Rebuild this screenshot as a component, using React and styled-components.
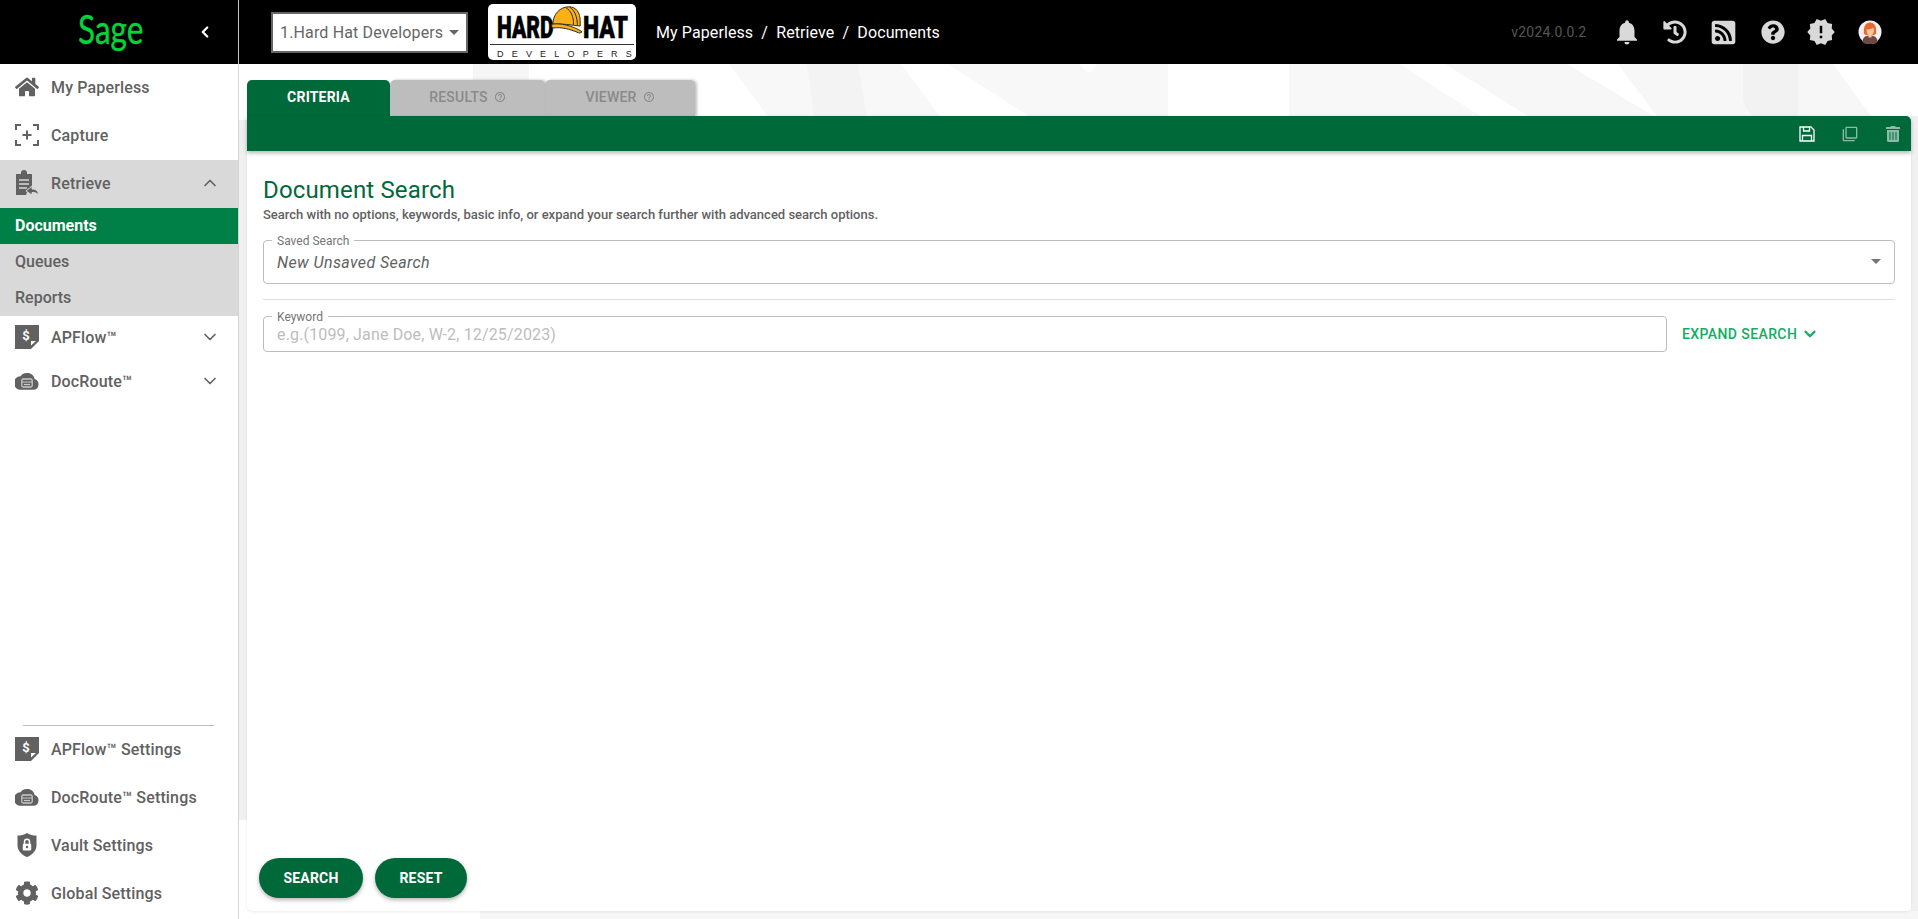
import React from "react";
import styled, { createGlobalStyle } from "styled-components";
import { ChevronLeft, ChevronDown, ChevronUp } from "lucide-react";
import { FaHome, FaCog, FaHistory, FaRssSquare, FaQuestionCircle, FaTrashAlt } from "react-icons/fa";
import { MdNotifications, MdNewReleases, MdOutlineFilterNone, MdHelpOutline } from "react-icons/md";

const GREEN = "#00693a";
const GREY = "#616161";

const CaptureIcon = () => (
  <svg width="24" height="24" viewBox="0 0 24 24" fill="none" stroke={GREY} strokeWidth="2">
    <path d="M1 7V2h5M18 2h5v5M23 17v5h-5M6 22H1v-5" />
    <path d="M12 7.500v9M7.500 12h9" />
  </svg>
);

const RetrieveIcon = () => (
  <svg width="24" height="26" viewBox="0 0 24 26">
    <path fill={GREY} d="M1 4h5V3a3 3 0 0 1 6 0v1h5v15h-4l-2 6H1z" />
    <path stroke="#d9d9d9" strokeWidth="1.600" d="M4 10h10M4 14h10M4 18h8" />
    <path fill={GREY} stroke="#d9d9d9" strokeWidth="1" d="M11 21l6-5v3c4 0 6 2 7 6-2-2-4-2.500-7-2.500V25z" />
  </svg>
);

const ApFlowIcon = () => (
  <svg width="24" height="24" viewBox="0 0 24 24">
    <path fill={GREY} d="M0 0h24v16l-8 8H0z" />
    <text x="11" y="15" fontFamily="Roboto, sans-serif" fontSize="13" fontWeight="700" fill="#fff" textAnchor="middle">$</text>
    <path fill="#fff" d="M16 20.500l5-4.500h-5z" />
  </svg>
);

const DocRouteIcon = () => (
  <svg width="24" height="24" viewBox="0 0 24 24">
    <path fill={GREY} d="M19.700 10A8 8 0 0 0 5.500 7.200 6.800 6.800 0 0 0 5.800 20.800h13.200a5.600 5.600 0 0 0 .7-10.800z" />
    <rect x="6.800" y="10" width="10.400" height="8" rx="1.500" fill="none" stroke="#c9c9c9" strokeWidth="1.300" />
    <path d="M7 13h10" stroke="#c9c9c9" strokeWidth="1" />
    <path d="M9 15.500h6" stroke="#c9c9c9" strokeWidth="1.200" />
  </svg>
);

const VaultIcon = () => (
  <svg width="24" height="24" viewBox="0 0 24 24">
    <path fill={GREY} d="M12 0C9 2 6 2.500 2.500 2.500V12c0 5.500 4 10 9.500 12 5.500-2 9.500-6.500 9.500-12V2.500C18 2.500 15 2 12 0z" />
    <path fill="none" stroke="#fff" strokeWidth="1.500" d="M9.500 11V8.800a2.500 2.500 0 0 1 5 0V11" />
    <rect x="7.800" y="10.800" width="8.400" height="6.700" rx="1" fill="#fff" />
    <circle cx="12" cy="14" r="1.200" fill={GREY} />
  </svg>
);

const SaveIcon = () => (
  <svg width="16" height="16" viewBox="0 0 16 16" fill="none" stroke="#fff" strokeWidth="1.300">
    <path d="M1 1h11l3 3v11H1z" />
    <path d="M4.500 1v4h6V1M3.500 15V9.500h9V15" />
  </svg>
);

const Avatar = () => (
  <svg width="24" height="24" viewBox="0 0 24 24">
    <circle cx="12" cy="12" r="11.500" fill="#f1f1f4" />
    <path fill="#6e4a41" d="M4.500 22c0-4.500 3-6.500 7.500-6.500s7.500 2 7.500 6.500a11.500 11.500 0 0 1-15 0z" />
    <path fill="#e9682b" d="M6 14c-1-6 1-11.500 6-11.500S19 8 18 14l-2 1H8z" />
    <path fill="#f6c7a6" d="M8.500 9.500c2 0 5-.5 7-2l.5 3c0 3-2 5-4 5s-3.500-2-3.500-6zM10.500 14h3v3.500h-3z" />
  </svg>
);

const HelmetIcon = () => (
  <svg width="32" height="29" viewBox="0 0 34 30">
    <path fill="#fbb018" stroke="#222" strokeWidth="1" d="M2 20C2 9 10 1.500 19 1.500c8 0 12 6.500 12 15v5.500C22 21 11 19 2 20z" />
    <path fill="#fbb018" stroke="#222" strokeWidth="1" d="M1 20c9-1.500 22 1.500 32 8-1 1.500-3 1.500-4 1C20 25 10 23 3 24c-2 0-3-2-2-4z" />
    <path fill="none" stroke="#222" strokeWidth="1" d="M16 2.500c5 3 8 9 8 18M20 2c5 3 8 10 8 19" />
  </svg>
);

const navTop = [
  { label: "My Paperless", icon: <FaHome size={24} /> },
  { label: "Capture", icon: <CaptureIcon /> },
];

const navBottom = [
  { label: "APFlow™ Settings", icon: <ApFlowIcon /> },
  { label: "DocRoute™ Settings", icon: <DocRouteIcon /> },
  { label: "Vault Settings", icon: <VaultIcon /> },
  { label: "Global Settings", icon: <FaCog size={24} /> },
];

const App = () => {
  return (
    <Page>
      <GlobalStyle />
      <TopBar>
        <Brand>
          <SageLogo>Sage</SageLogo>
          <ChevronLeft size={18} strokeWidth={3} color="#fff" />
        </Brand>
        <CompanySelect>
          <span>1.Hard Hat Developers</span>
          <Caret />
        </CompanySelect>
        <CompanyLogo>
          <LogoWords>
            <LogoWord $width={65} $scale={0.68}>HARD</LogoWord>
            <LogoWord $width={45} $scale={0.74}>HAT</LogoWord>
          </LogoWords>
          <Helmet><HelmetIcon /></Helmet>
          <LogoSub>DEVELOPERS</LogoSub>
        </CompanyLogo>
        <Crumbs>My Paperless&nbsp; / &nbsp;Retrieve&nbsp; / &nbsp;Documents</Crumbs>
        <Version>v2024.0.0.2</Version>
        <TopIcons>
          <TopIcon><MdNotifications size={30} /></TopIcon>
          <TopIcon><FaHistory size={24} /></TopIcon>
          <TopIcon><FaRssSquare size={27} /></TopIcon>
          <TopIcon><FaQuestionCircle size={24} /></TopIcon>
          <TopIcon><MdNewReleases size={30} /></TopIcon>
          <TopIcon><Avatar /></TopIcon>
        </TopIcons>
      </TopBar>
      <Body>
        <Sidebar>
          {navTop.map((item) => (
            <NavRow key={item.label}>
              <NavIcon>{item.icon}</NavIcon>
              {item.label}
            </NavRow>
          ))}
          <NavRow $open>
            <NavIcon><RetrieveIcon /></NavIcon>
            Retrieve
            <Chevron><ChevronUp size={20} /></Chevron>
          </NavRow>
          <SubRow $active>Documents</SubRow>
          <SubRow>Queues</SubRow>
          <SubRow>Reports</SubRow>
          <NavRow $short>
            <NavIcon><ApFlowIcon /></NavIcon>
            APFlow™
            <Chevron><ChevronDown size={20} /></Chevron>
          </NavRow>
          <NavRow $short>
            <NavIcon><DocRouteIcon /></NavIcon>
            DocRoute™
            <Chevron><ChevronDown size={20} /></Chevron>
          </NavRow>
          <SidebarBottom>
            {navBottom.map((item) => (
              <NavRow key={item.label}>
                <NavIcon>{item.icon}</NavIcon>
                {item.label}
              </NavRow>
            ))}
          </SidebarBottom>
        </Sidebar>
        <Main>
          <Backdrop viewBox="239 64 1679 855" preserveAspectRatio="none">
            <rect x="473" y="64" width="56" height="60" fill="#f6f6f6" />
            <path d="M729 64L815 180H987L901 64z" fill="#f8f8f8" />
            <path d="M807 64h51l10 60h-53z" fill="#f3f3f3" />
            <path d="M948 64H1168V124H1041z" fill="#f8f8f8" />
            <path d="M1080 64h17l-4 6q-4 4-8 0z" fill="#fff" />
            <path d="M1289 64H1399L1493 124H1289z" fill="#f8f8f8" />
            <path d="M1445 64H1567L1667 124H1541z" fill="#f7f7f7" />
            <path d="M1618 64H1833L1925 190H1712z" fill="#f7f7f7" />
            <path d="M1743 64h55v56h-40q-15-10-15-25z" fill="#f2f2f2" />
            <rect x="239" y="120" width="8" height="700" fill="#f0f0f0" />
            <rect x="1911" y="116" width="7" height="803" fill="#f0f0f0" />
            <rect x="480" y="911" width="1438" height="8" fill="#f6f6f6" />
          </Backdrop>
          <Tabs>
            <Tab $active>CRITERIA</Tab>
            <Tab $width={155}>RESULTS <MdHelpOutline size={12} /></Tab>
            <Tab $width={150}>VIEWER <MdHelpOutline size={12} /></Tab>
          </Tabs>
          <Toolbar>
            <ToolIcon><SaveIcon /></ToolIcon>
            <ToolIcon $off><MdOutlineFilterNone size={16} /></ToolIcon>
            <ToolIcon $off><FaTrashAlt size={16} /></ToolIcon>
          </Toolbar>
          <Panel>
            <Title>Document Search</Title>
            <Hint>Search with no options, keywords, basic info, or expand your search further with advanced search options.</Hint>
            <Field $height={44}>
              <FieldLabel>Saved Search</FieldLabel>
              <FieldValue $italic>New Unsaved Search</FieldValue>
              <FieldCaret />
            </Field>
            <Divider />
            <KeywordRow>
              <Field $height={36} $grow>
                <FieldLabel>Keyword</FieldLabel>
                <FieldValue $muted>e.g.(1099, Jane Doe, W-2, 12/25/2023)</FieldValue>
              </Field>
              <ExpandLink>EXPAND SEARCH <ChevronDown size={18} strokeWidth={3} /></ExpandLink>
            </KeywordRow>
            <Actions>
              <PillButton $width={104}>SEARCH</PillButton>
              <PillButton $width={92}>RESET</PillButton>
            </Actions>
          </Panel>
        </Main>
      </Body>
    </Page>
  );
};

const GlobalStyle = createGlobalStyle`
  html, body {
    margin: 0;
    height: 100%;
    overflow: hidden;
    background: #fff;
    font-family: Roboto, "Liberation Sans", sans-serif;
  }
  * {
    box-sizing: border-box;
  }
`;

const Page = styled.div`
  display: flex;
  flex-direction: column;
  height: 919px;
`;

const TopBar = styled.header`
  display: flex;
  align-items: center;
  height: 64px;
  flex-shrink: 0;
  background: #000;
`;

const Brand = styled.div`
  display: flex;
  align-items: center;
  justify-content: space-between;
  width: 239px;
  height: 100%;
  padding: 0 24px 0 78px;
  border-right: 1px solid #c8c8c8;
`;

const SageLogo = styled.div`
  width: 66px;
  font-family: Lato, sans-serif;
  font-size: 41px;
  line-height: 64px;
  color: #00d639;
  padding-bottom: 6px;
  white-space: nowrap;
  -webkit-text-stroke: 0.4px #00d639;
  transform: scaleX(0.77);
  transform-origin: left center;
`;

const CompanySelect = styled.div`
  display: flex;
  align-items: center;
  justify-content: space-between;
  width: 197px;
  height: 41px;
  margin-left: 32px;
  padding: 0 7px;
  border: 2px solid #666;
  background: #fff;
  color: #666;
  font-size: 16px;
  letter-spacing: 0.15px;
`;

const Caret = styled.i`
  width: 0;
  height: 0;
  border-left: 5px solid transparent;
  border-right: 5px solid transparent;
  border-top: 5px solid #666;
`;

const CompanyLogo = styled.div`
  position: relative;
  display: flex;
  flex-direction: column;
  width: 148px;
  height: 56px;
  margin-left: 20px;
  padding: 11px 2px 0;
  border-radius: 5px;
  background: #fff;
`;

const LogoWords = styled.div`
  display: flex;
  justify-content: space-between;
  height: 30px;
  padding: 0 6px 0 7px;
  border-bottom: 1px solid #333;
`;

const LogoWord = styled.span`
  display: block;
  width: ${(props) => props.$width}px;
  font-family: Roboto, sans-serif;
  font-weight: 900;
  font-size: 31px;
  line-height: 26px;
  color: #000;
  -webkit-text-stroke: 0.5px #000;
  transform: scaleX(${(props) => props.$scale});
  transform-origin: left center;
`;

const Helmet = styled.div`
  position: absolute;
  left: 63px;
  top: 1px;
  line-height: 0;
`;

const LogoSub = styled.div`
  margin-top: 4px;
  padding-left: 7px;
  font-family: "Liberation Sans", sans-serif;
  font-size: 9px;
  line-height: 10px;
  letter-spacing: 8.2px;
  color: #222;
  white-space: nowrap;
`;

const Crumbs = styled.nav`
  margin-left: 20px;
  color: #fff;
  font-size: 16px;
  letter-spacing: 0.1px;
  white-space: nowrap;
`;

const Version = styled.div`
  margin-left: auto;
  margin-right: 16px;
  color: #555;
  font-size: 14px;
  letter-spacing: 0.2px;
`;

const TopIcons = styled.div`
  display: flex;
  align-items: center;
  margin-right: 24px;
`;

const TopIcon = styled.div`
  display: flex;
  align-items: center;
  justify-content: center;
  width: 48.600px;
  color: #d9d9d9;
`;

const Body = styled.div`
  display: flex;
  flex: 1;
  min-height: 0;
`;

const Sidebar = styled.aside`
  display: flex;
  flex-direction: column;
  width: 239px;
  flex-shrink: 0;
  border-right: 1px solid #d4d4d4;
  background: #fff;
`;

const NavRow = styled.div`
  position: relative;
  display: flex;
  align-items: center;
  gap: 12px;
  height: ${(props) => (props.$short ? "44px" : "48px")};
  padding: 0 0 2px 15px;
  background: ${(props) => (props.$open ? "#d9d9d9" : "transparent")};
  color: ${GREY};
  font-size: 16px;
  font-weight: 500;
  letter-spacing: 0.15px;
  white-space: nowrap;
`;

const NavIcon = styled.span`
  display: flex;
  align-items: center;
  justify-content: center;
  width: 24px;
  height: 24px;
  color: ${GREY};
`;

const Chevron = styled.span`
  position: absolute;
  right: 18px;
  top: 50%;
  height: 20px;
  margin-top: -11px;
  color: ${GREY};
`;

const SubRow = styled.div`
  display: flex;
  align-items: center;
  height: 36px;
  padding: 0 0 2px 15px;
  background: ${(props) => (props.$active ? "#007f46" : "#d9d9d9")};
  color: ${(props) => (props.$active ? "#fff" : GREY)};
  font-size: 16px;
  font-weight: ${(props) => (props.$active ? 700 : 500)};
`;

const SidebarBottom = styled.div`
  margin-top: auto;
  margin-bottom: 1px;
  position: relative;
  &::before {
    content: "";
    display: block;
    height: 1px;
    margin: 0 24px 0 23px;
    background: #bdbdbd;
  }
`;

const Main = styled.main`
  position: relative;
  display: flex;
  flex-direction: column;
  flex: 1;
  min-width: 0;
  padding: 16px 7px 8px 8px;
`;

const Backdrop = styled.svg`
  position: absolute;
  left: 0;
  top: 0;
  width: 100%;
  height: 100%;
`;

const Tabs = styled.div`
  position: relative;
  display: flex;
  height: 36px;
`;

const Tab = styled.div`
  display: flex;
  align-items: center;
  justify-content: center;
  gap: 6px;
  width: ${(props) => (props.$width ? props.$width + "px" : "143px")};
  padding-bottom: 2px;
  border-radius: 5px 5px 0 0;
  background: ${(props) => (props.$active ? GREEN : "#bdbdbd")};
  color: ${(props) => (props.$active ? "#fff" : "#8a8a8a")};
  font-size: 14px;
  font-weight: ${(props) => (props.$active ? 700 : 500)};
  letter-spacing: 0.2px;
  box-shadow: ${(props) => (props.$active ? "none" : "2px 0 3px rgba(0,0,0,.25)")};
`;

const Toolbar = styled.div`
  position: relative;
  z-index: 2;
  display: flex;
  align-items: center;
  justify-content: flex-end;
  gap: 7px;
  height: 35px;
  border-radius: 0 5px 0 0;
  background: ${GREEN};
  box-shadow: 0 2px 4px rgba(0, 0, 0, 0.3);
`;

const ToolIcon = styled.span`
  display: flex;
  align-items: center;
  justify-content: center;
  width: 36px;
  color: #fff;
  opacity: ${(props) => (props.$off ? 0.55 : 1)};
`;

const Panel = styled.section`
  position: relative;
  display: flex;
  flex-direction: column;
  flex: 1;
  padding: 0 16px 13px;
  border-radius: 0 0 5px 5px;
  background: #fff;
  box-shadow: 0 1px 3px rgba(0, 0, 0, 0.08);
`;

const Title = styled.h1`
  margin: 25px 0 0;
  color: ${GREEN};
  font-size: 24px;
  font-weight: 400;
  line-height: 28px;
  letter-spacing: 0.15px;
`;

const Hint = styled.p`
  margin: 3px 0 17px;
  color: ${GREY};
  font-size: 13px;
  font-weight: 500;
  line-height: 16px;
`;

const Field = styled.div`
  position: relative;
  display: flex;
  align-items: center;
  flex: ${(props) => (props.$grow ? 1 : "none")};
  height: ${(props) => props.$height}px;
  padding-left: 13px;
  border: 1px solid #bdbdbd;
  border-radius: 4px;
`;

const FieldLabel = styled.label`
  position: absolute;
  left: 8px;
  top: -6px;
  padding: 0 5px;
  background: #fff;
  color: #757575;
  font-size: 12px;
  line-height: 12px;
`;

const FieldValue = styled.span`
  color: ${(props) => (props.$muted ? "#bdbdbd" : "#616161")};
  font-size: 16px;
  font-style: ${(props) => (props.$italic ? "italic" : "normal")};
  letter-spacing: ${(props) => (props.$italic ? "0.4px" : "0.15px")};
  padding-top: 1px;
`;

const FieldCaret = styled.i`
  position: absolute;
  right: 13px;
  top: 18px;
  width: 0;
  height: 0;
  border-left: 5px solid transparent;
  border-right: 5px solid transparent;
  border-top: 5px solid #757575;
`;

const Divider = styled.div`
  height: 1px;
  margin: 15px 0 16px;
  background: #e0e0e0;
`;

const KeywordRow = styled.div`
  display: flex;
  align-items: center;
  gap: 15px;
`;

const ExpandLink = styled.div`
  display: flex;
  align-items: center;
  gap: 4px;
  width: 213px;
  padding-bottom: 1px;
  color: #0fae62;
  font-size: 14px;
  font-weight: 500;
  letter-spacing: 0.4px;
`;

const Actions = styled.div`
  display: flex;
  gap: 12px;
  margin: auto 0 0 -4px;
`;

const PillButton = styled.button`
  width: ${(props) => props.$width}px;
  height: 40px;
  padding: 0;
  border: 0;
  border-radius: 20px;
  background: ${GREEN};
  color: #fff;
  font-family: inherit;
  font-size: 14px;
  font-weight: 700;
  letter-spacing: 0.2px;
  box-shadow: 0 2px 4px rgba(0, 0, 0, 0.3);
`;

export default App;
